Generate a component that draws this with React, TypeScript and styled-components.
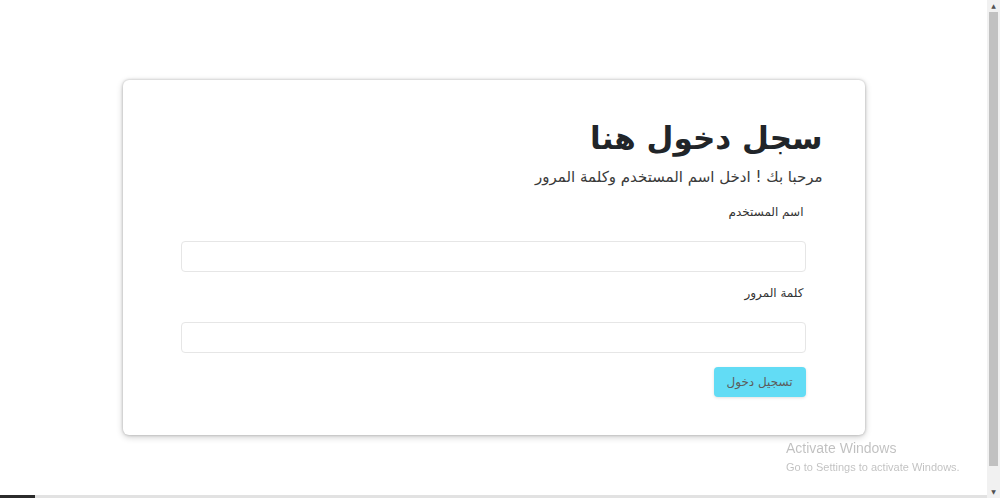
import React from "react";
import styled, { createGlobalStyle } from "styled-components";

const GlobalStyle = createGlobalStyle`
  html, body {
    margin: 0;
    padding: 0;
    background: #fff;
    font-family: "DejaVu Sans", "Noto Sans", sans-serif;
    overflow: hidden;
  }
`;

const Page = styled.div`
  display: flex;
  flex-direction: row;
  width: 100%;
  height: 498px;
`;

const Main = styled.div`
  flex: 1;
  display: flex;
  justify-content: center;
  padding-top: 80px;
`;

const Card = styled.div`
  direction: rtl;
  width: 742px;
  height: 355px;
  box-sizing: border-box;
  background: #fff;
  border-radius: 6px;
  box-shadow: 0 0 3px rgba(0, 0, 0, 0.25), 0 2px 7px rgba(0, 0, 0, 0.2);
  padding: 38px 42px 0 58px;
`;

const Title = styled.h1`
  margin: 0;
  font-size: 31px;
  font-weight: 700;
  color: #212529;
  line-height: 40px;
`;

const Subtitle = styled.p`
  margin: 8px 0 0;
  font-size: 15px;
  color: #3a3a3a;
  line-height: 22px;
`;

const Form = styled.form`
  display: flex;
  flex-direction: column;
  align-items: stretch;
  padding-right: 17px;
  margin-top: 14px;
`;

const Label = styled.label`
  font-size: 12px;
  color: #333;
  line-height: 20px;
  margin-right: 2px;
  margin-bottom: 19px;
`;

const Input = styled.input<{ $last?: boolean }>`
  height: 31px;
  box-sizing: border-box;
  border: 1px solid #e6e6e6;
  border-radius: 4px;
  background: #fff;
  margin-bottom: ${(p) => (p.$last ? "14px" : "11px")};
  outline: none;
`;

const Submit = styled.button`
  align-self: flex-start;
  width: 92px;
  height: 30px;
  border: none;
  border-radius: 4px;
  background: #62dcf5;
  color: #5c5c5c;
  font-family: inherit;
  font-size: 12px;
  box-shadow: 0 1px 3px rgba(0, 0, 0, 0.12);
`;

const ScrollTrack = styled.div`
  width: 13px;
  background: #f1f1f1;
  display: flex;
  flex-direction: column;
  align-items: center;
`;

const ScrollArrow = styled.div`
  height: 12px;
  width: 100%;
  display: flex;
  align-items: center;
  justify-content: center;
  color: #505050;
  font-size: 6px;
  line-height: 1;
`;

const ScrollThumb = styled.div`
  width: 9px;
  height: 454px;
  background: #c1c1c1;
`;

const ScrollRest = styled.div`
  flex: 1;
`;

const Watermark = styled.div`
  position: fixed;
  left: 786px;
  top: 439px;
  font-family: "Liberation Sans", Arial, sans-serif;
  color: rgba(0, 0, 0, 0.25);
`;

const WatermarkTitle = styled.div`
  font-size: 14px;
  line-height: 18px;
`;

const WatermarkText = styled.div`
  font-size: 11px;
  line-height: 16px;
  margin-top: 2px;
`;

const Taskbar = styled.div`
  position: fixed;
  left: 0;
  bottom: 0;
  width: 987px;
  height: 3px;
  background: #e2e2e2;
  display: flex;
`;

const TaskbarStart = styled.div`
  width: 35px;
  background: #2b2b2b;
`;

export default function App() {
  return (
    <>
      <GlobalStyle />
      <Page>
        <Main>
          <Card>
            <Title>سجل دخول هنا</Title>
            <Subtitle>مرحبا بك ! ادخل اسم المستخدم وكلمة المرور</Subtitle>
            <Form onSubmit={(e) => e.preventDefault()}>
              <Label>اسم المستخدم</Label>
              <Input type="text" />
              <Label>كلمة المرور</Label>
              <Input type="password" $last />
              <Submit type="submit">تسجيل دخول</Submit>
            </Form>
          </Card>
        </Main>
        <ScrollTrack>
          <ScrollArrow>▲</ScrollArrow>
          <ScrollThumb />
          <ScrollRest />
          <ScrollArrow>▼</ScrollArrow>
        </ScrollTrack>
      </Page>
      <Watermark>
        <WatermarkTitle>Activate Windows</WatermarkTitle>
        <WatermarkText>Go to Settings to activate Windows.</WatermarkText>
      </Watermark>
      <Taskbar>
        <TaskbarStart />
      </Taskbar>
    </>
  );
}
